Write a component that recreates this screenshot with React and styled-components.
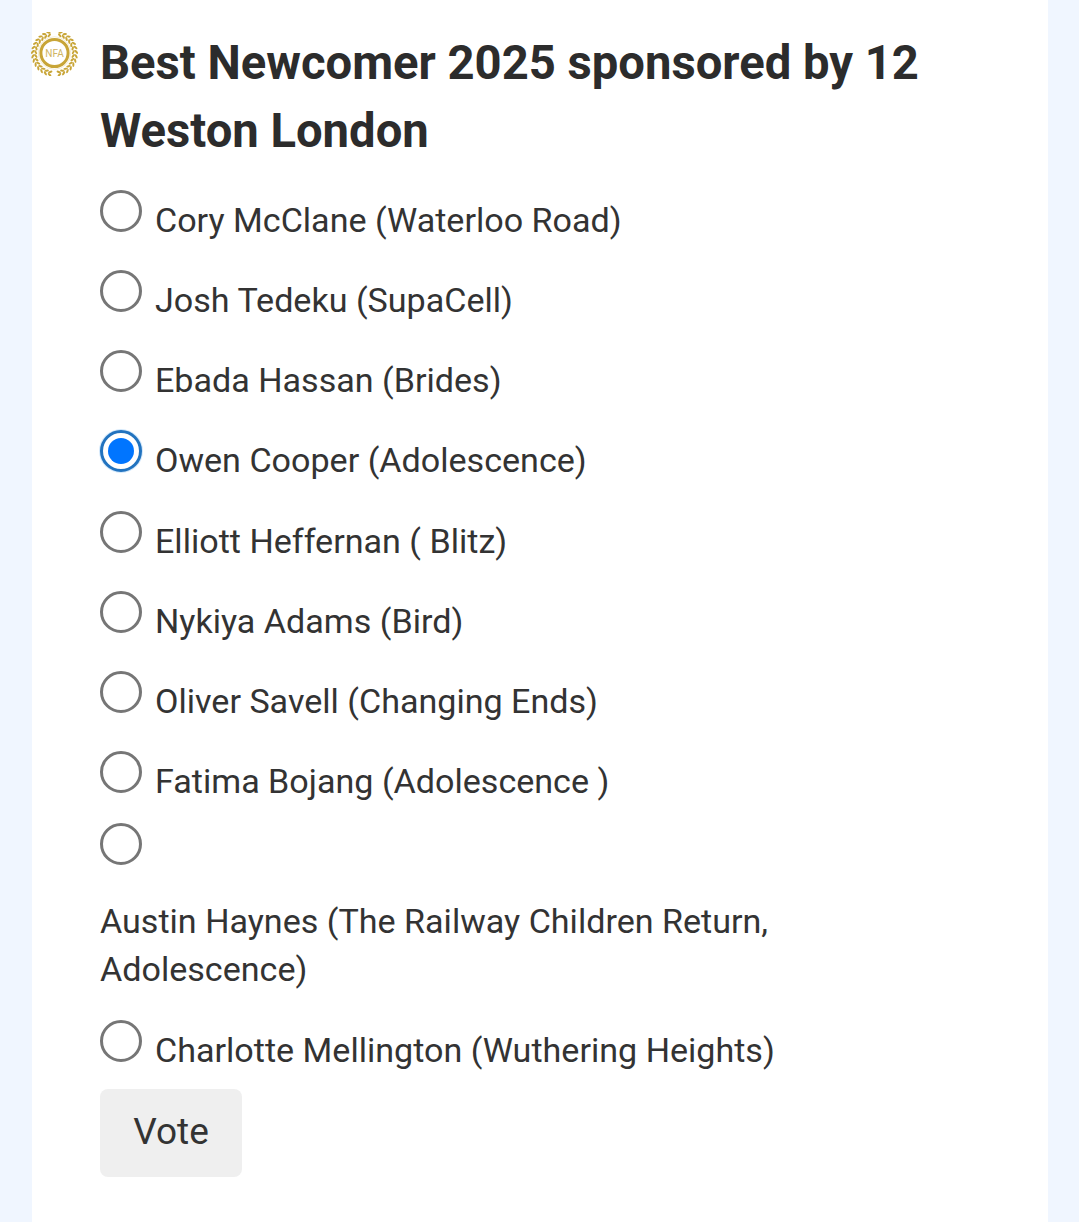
import React from "react";
import styled, { createGlobalStyle } from "styled-components";

const options = [
  { id: "cory", label: "Cory McClane (Waterloo Road)" },
  { id: "josh", label: "Josh Tedeku (SupaCell)" },
  { id: "ebada", label: "Ebada Hassan (Brides)" },
  { id: "owen", label: "Owen Cooper (Adolescence)", checked: true },
  { id: "elliott", label: "Elliott Heffernan ( Blitz)" },
  { id: "nykiya", label: "Nykiya Adams (Bird)" },
  { id: "oliver", label: "Oliver Savell (Changing Ends)" },
  { id: "fatima", label: "Fatima Bojang (Adolescence )" },
  { id: "austin", label: "Austin Haynes (The Railway Children Return, Adolescence)", wrapped: true },
  { id: "charlotte", label: "Charlotte Mellington (Wuthering Heights)" },
];

const GOLD = "#c8a537";
const CX = 23.5;
const CY = 21.5;

// left branch of the wreath; the right one is mirrored in the svg
const leaves = [];
for (let i = 0; i < 14; i++) {
  const deg = 103 + i * 11.6;
  const a = (deg * Math.PI) / 180;
  [
    { r: 18.9, tilt: -32 },
    { r: 21.9, tilt: 32 },
  ].forEach(({ r, tilt }) => {
    leaves.push({
      x: CX + r * Math.cos(a),
      y: CY + r * Math.sin(a),
      rot: deg + 90 + tilt,
    });
  });
}

const Branch = ({ mirrored }) => (
  <g transform={mirrored ? `translate(${CX * 2} 0) scale(-1 1)` : undefined}>
    {leaves.map((l, i) => (
      <ellipse key={i} cx={l.x} cy={l.y} rx="2.3" ry="1.05" fill={GOLD} transform={`rotate(${l.rot} ${l.x} ${l.y})`} />
    ))}
  </g>
);

const Logo = () => (
  <LogoMark viewBox="0 0 47 44" aria-hidden="true">
    <Branch />
    <Branch mirrored />
    <circle cx={CX} cy={CY - 0.5} r="16.3" fill="none" stroke="#efe4c0" strokeWidth="0.7" />
    <circle cx={CX} cy={CY - 0.5} r="13.6" fill="none" stroke={GOLD} strokeWidth="3" />
    <NfaText x={CX} y={CY + 3} textAnchor="middle">NFA</NfaText>
  </LogoMark>
);

const App = () => (
  <Page>
    <GlobalStyle />
    <Card>
      <Heading>
        <Logo />
        Best Newcomer 2025 sponsored by 12 Weston London
      </Heading>
      <form>
        {options.map((o) => (
          <Row key={o.id} $wrapped={o.wrapped}>
            <Radio type="radio" name="newcomer" defaultChecked={o.checked} />
            <OptionText $wrapped={o.wrapped}>{o.label}</OptionText>
          </Row>
        ))}
        <VoteButton type="button">Vote</VoteButton>
      </form>
    </Card>
  </Page>
);

export default App;

const GlobalStyle = createGlobalStyle`
  html, body {
    margin: 0;
    padding: 0;
  }
  body {
    background: #f0f6ff;
    font-family: Roboto, "Liberation Sans", sans-serif;
  }
`;

const Page = styled.div`
  padding: 0 31px 0 32px;
  height: 1222px;
  overflow: hidden;
`;

const Card = styled.main`
  background: #fff;
  height: 100%;
  box-sizing: border-box;
  padding: 29px 68px 0;
  color: #333;
`;

const Heading = styled.h2`
  position: relative;
  margin: 0 0 25px;
  font-size: 47.2px;
  line-height: 68px;
  font-weight: 700;
  color: #2c2c2c;
`;

const LogoMark = styled.svg`
  position: absolute;
  left: -69px;
  top: 3px;
  width: 47px;
  height: 44px;
`;

const NfaText = styled.text`
  font-family: Roboto, sans-serif;
  font-size: 10px;
  font-weight: 400;
  fill: #d0b565;
`;

const Row = styled.label`
  display: flex;
  flex-wrap: ${(p) => (p.$wrapped ? "wrap" : "nowrap")};
  align-items: flex-start;
  margin-top: ${(p) => (p.$wrapped ? "-8px" : "0")};
  margin-bottom: 25.15px;
  font-size: 34.1px;
  line-height: 48px;
`;

const Radio = styled.input`
  appearance: none;
  flex: none;
  box-sizing: border-box;
  width: 42px;
  height: 42px;
  margin: 0;
  padding: 5px;
  border: 3px solid #767676;
  border-radius: 50%;
  background: #fff;

  &:checked {
    border-color: #2273bf;
    background: #0075ff content-box;
    box-shadow: 0 0 0 1px #d3e8fb;
  }
`;

const OptionText = styled.span`
  display: block;
  padding: ${(p) => (p.$wrapped ? "32px 0 2px" : "6px 0 1px")};
  margin-left: ${(p) => (p.$wrapped ? "0" : "13px")};
  flex-basis: ${(p) => (p.$wrapped ? "100%" : "auto")};
`;

const VoteButton = styled.button`
  display: block;
  box-sizing: border-box;
  width: 142px;
  height: 88px;
  margin-top: -11px;
  padding: 0 0 3px;
  border: 0;
  border-radius: 8px;
  background: #efefef;
  color: #333;
  font-family: Roboto, "Liberation Sans", sans-serif;
  font-size: 37px;
`;
